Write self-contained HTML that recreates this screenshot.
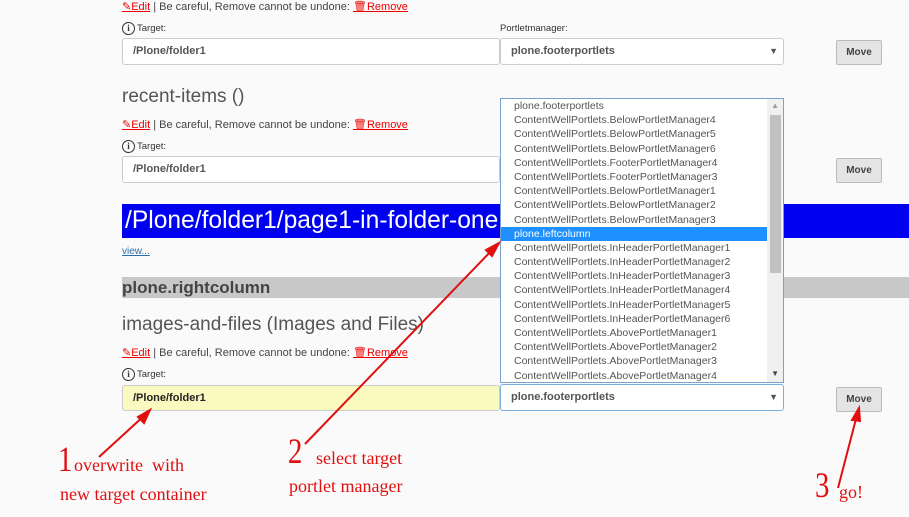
<!DOCTYPE html>
<html><head><meta charset="utf-8"><style>
body{margin:0;width:909px;height:517px;background:#fafafa;position:relative;overflow:hidden;font-family:"Liberation Sans",sans-serif;color:#444}
.a{position:absolute;white-space:nowrap}
.ed{font-size:11px;color:#444}
.ed .r{color:#e00;text-decoration:underline}
.lab{font-size:9.5px;color:#333;line-height:14px}
.ic{display:inline-block;width:11px;height:11px;border:1px solid #333;border-radius:50%;font:bold 9px "Liberation Serif",serif;text-align:center;line-height:11px;vertical-align:middle;margin-right:2px}
.inp{position:absolute;box-sizing:border-box;border:1px solid #ccc;border-radius:3px;background:#fff;font-size:11px;font-weight:bold;color:#555;padding-left:10px}
.btn{position:absolute;box-sizing:border-box;width:46px;height:25px;background:#e4e4e4;border:1px solid #bbb;border-radius:2px;font-size:10px;font-weight:bold;color:#444;text-align:center;line-height:23px}
.h{font-size:19px;color:#555}
.dd{position:absolute;left:500px;top:98px;width:284px;height:285px;box-sizing:border-box;border:1px solid #7aa0d0;background:#fff;overflow:hidden}
.dd div{height:14.2px;line-height:14.2px;font-size:10.5px;color:#555;padding-left:13px;margin-right:16px}
.dd .s{background:#1e90ff;color:#fff}
.an{position:absolute;font-family:"Liberation Serif",serif;color:#e01010;white-space:nowrap}
.n{font-size:36px;transform:scaleX(0.8);transform-origin:left}
</style></head><body>

<div class="a ed" style="left:122px;top:0px"><span class="r">✎Edit</span> | Be careful, Remove cannot be undone: <span class="r">🗑Remove</span></div>
<div class="a lab" style="left:122px;top:22px"><span class="ic">i</span>Target:</div>
<div class="a lab" style="left:500px;top:22px">Portletmanager:</div>
<div class="inp" style="left:122px;top:38px;width:378px;height:27px;line-height:25px">/Plone/folder1</div>
<div class="inp" style="left:500px;top:38px;width:284px;height:27px;line-height:25px">plone.footerportlets<span style="position:absolute;right:5px;font-size:9px;color:#555">▼</span></div>
<div class="btn" style="left:836px;top:40px">Move</div>

<div class="a h" style="left:122px;top:86px">recent-items ()</div>
<div class="a ed" style="left:122px;top:118px"><span class="r">✎Edit</span> | Be careful, Remove cannot be undone: <span class="r">🗑Remove</span></div>
<div class="a lab" style="left:122px;top:140px"><span class="ic">i</span>Target:</div>
<div class="inp" style="left:122px;top:156px;width:378px;height:27px;line-height:25px">/Plone/folder1</div>
<div class="btn" style="left:836px;top:158px">Move</div>

<div class="a" style="left:122px;top:204px;width:787px;height:34px;background:#0000f0;color:#fff;font-size:24.6px;line-height:34px;padding-left:3px;box-sizing:border-box">/Plone/folder1/page1-in-folder-one</div>
<div class="a" style="left:122px;top:246px;font-size:10px;color:#2a6fa8;text-decoration:underline">view...</div>
<div class="a" style="left:122px;top:277px;width:787px;height:21px;background:#c8c8c8;font-size:17px;font-weight:bold;color:#444;line-height:21px">plone.rightcolumn</div>

<div class="a h" style="left:122px;top:314px">images-and-files (Images and Files)</div>
<div class="a ed" style="left:122px;top:346px"><span class="r">✎Edit</span> | Be careful, Remove cannot be undone: <span class="r">🗑Remove</span></div>
<div class="a lab" style="left:122px;top:368px"><span class="ic">i</span>Target:</div>
<div class="inp" style="left:122px;top:385px;width:378px;height:26px;line-height:24px;background:#fafac0;color:#222">/Plone/folder1</div>
<div class="inp" style="left:500px;top:384px;width:284px;height:27px;line-height:25px;border-color:#7ab0e0">plone.footerportlets<span style="position:absolute;right:5px;font-size:9px;color:#555">▼</span></div>
<div class="btn" style="left:836px;top:387px">Move</div>

<div class="dd">
<div>plone.footerportlets</div>
<div>ContentWellPortlets.BelowPortletManager4</div>
<div>ContentWellPortlets.BelowPortletManager5</div>
<div>ContentWellPortlets.BelowPortletManager6</div>
<div>ContentWellPortlets.FooterPortletManager4</div>
<div>ContentWellPortlets.FooterPortletManager3</div>
<div>ContentWellPortlets.BelowPortletManager1</div>
<div>ContentWellPortlets.BelowPortletManager2</div>
<div>ContentWellPortlets.BelowPortletManager3</div>
<div class="s">plone.leftcolumn</div>
<div>ContentWellPortlets.InHeaderPortletManager1</div>
<div>ContentWellPortlets.InHeaderPortletManager2</div>
<div>ContentWellPortlets.InHeaderPortletManager3</div>
<div>ContentWellPortlets.InHeaderPortletManager4</div>
<div>ContentWellPortlets.InHeaderPortletManager5</div>
<div>ContentWellPortlets.InHeaderPortletManager6</div>
<div>ContentWellPortlets.AbovePortletManager1</div>
<div>ContentWellPortlets.AbovePortletManager2</div>
<div>ContentWellPortlets.AbovePortletManager3</div>
<div>ContentWellPortlets.AbovePortletManager4</div>
<span style="position:absolute;right:0;top:0;width:16px;height:283px;background:#f0f0f0"></span>
<span style="position:absolute;right:2px;top:16px;width:11px;height:158px;background:#c1c1c1"></span>
<span style="position:absolute;right:4px;top:2px;font-size:8px;color:#999">▲</span>
<span style="position:absolute;right:4px;top:270px;font-size:8px;color:#444">▼</span>
</div>

<svg class="a" style="left:0;top:0" width="909" height="517">
<g stroke="#e01010" stroke-width="2" fill="#e01010">
<line x1="99" y1="457" x2="146" y2="414"/><polygon points="150,410 138,417 144,423"/>
<line x1="305" y1="444" x2="495" y2="247"/><polygon points="499,243 486,250 492,256"/>
<line x1="838" y1="488" x2="857" y2="415"/><polygon points="859,408 852,420 860,421"/>
</g></svg>

<div class="an n" style="left:58px;top:438px">1</div>
<div class="an" style="left:74px;top:455px;font-size:18px">overwrite&nbsp; with</div>
<div class="an" style="left:60px;top:484px;font-size:18px">new target container</div>
<div class="an n" style="left:288px;top:430px">2</div>
<div class="an" style="left:316px;top:448px;font-size:18px">select target</div>
<div class="an" style="left:289px;top:476px;font-size:18px">portlet manager</div>
<div class="an n" style="left:815px;top:464px">3</div>
<div class="an" style="left:839px;top:482px;font-size:18px">go!</div>
</body></html>
